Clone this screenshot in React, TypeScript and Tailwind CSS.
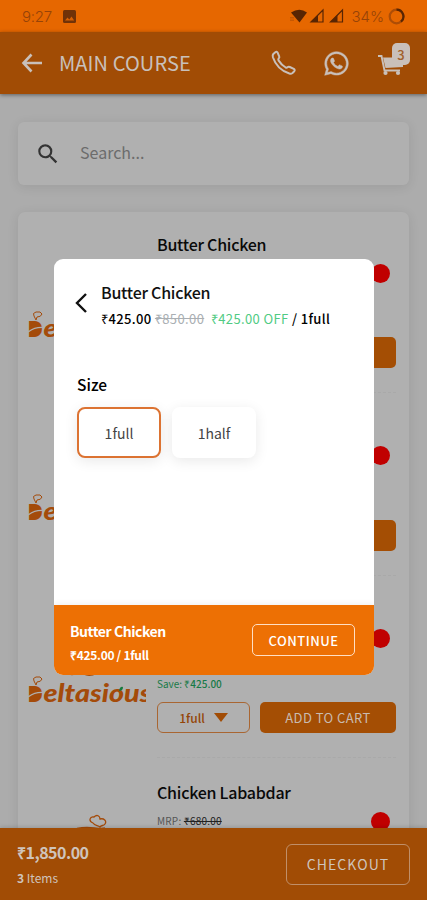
import { MdSearch } from "react-icons/md";
import { FaWhatsapp } from "react-icons/fa";

const dishes = [
  { name: "Butter Chicken", mrp: "₹850.00", save: "₹425.00", size: "1full" },
  { name: "Kadai Chicken", mrp: "₹850.00", save: "₹425.00", size: "1full" },
  { name: "Chicken Masala", mrp: "₹850.00", save: "₹425.00", size: "1full" },
  { name: "Chicken Lababdar", mrp: "₹680.00", save: "₹340.00", size: "1full" },
];

function StatusBar() {
  return (
    <div className="flex h-8 shrink-0 items-center bg-[#e66700] pl-[22px] pr-[22px] text-[#964308]">
      <span className="font-['Inter',sans-serif] text-[15px] font-light leading-none tracking-[-0.2px]">9:27</span>
      <svg className="ml-[11px]" width="13" height="13" viewBox="0 0 13 13">
        <rect width="13" height="13" rx="1.5" fill="#703208" />
        <path d="M2 10.5l2.500-3 1.800 2 2.200-3 2.700 4z" fill="#d66004" />
      </svg>
      <div className="ml-auto flex items-center">
        <svg width="54" height="16" viewBox="0 0 54 16" fill="#582503">
          <path d="M1 4.500Q9.500 -1 17 4.500L9.500 14.500z" />
          <path d="M0 8h3v7H0z" fill="#e66700" />
          <path d="M1 9v5M3 9v5" stroke="#a64a05" strokeWidth="1" strokeDasharray="1.500 1" />
          <path d="M33 2v12H21z" fill="none" stroke="#582503" strokeWidth="1.200" />
          <path d="M28 7v7h-7z" />
          <path d="M52.500 2v12h-12z" fill="none" stroke="#582503" strokeWidth="1.200" />
          <path d="M47.500 7v7h-7z" />
        </svg>
        <span className="ml-[7px] font-['Inter',sans-serif] text-[15px] font-light leading-none">34%</span>
        <svg className="ml-[4px]" width="17" height="17" viewBox="0 0 17 17" fill="none" strokeWidth="2.200">
          <circle cx="8.500" cy="8.500" r="6.800" stroke="#ad4d06" />
          <path d="M8.500 1.700a6.800 6.800 0 0 1 4.500 12" stroke="#582503" />
        </svg>
      </div>
    </div>
  );
}

function Header() {
  return (
    <header className="relative z-10 flex h-[62px] shrink-0 items-center bg-[#a14c05] pl-[21px] text-[#c9c0ba] shadow-[0_1px_4px_rgba(0,0,0,0.45)]">
      <svg width="22" height="20" viewBox="0 0 22 20" fill="none" stroke="currentColor" strokeWidth="2.600">
        <path d="M10.500 1.500L2.500 10l8 8.500M2.500 10H21" />
      </svg>
      <h1 className="ml-[16px] text-[20px] leading-6 tracking-[0.1px]">MAIN COURSE</h1>
      <div className="ml-auto flex items-center">
        <svg width="26" height="26" viewBox="0 0 26 26" fill="none" stroke="currentColor" strokeWidth="2" strokeLinejoin="round">
          <path d="M2.300 4L4.300 2.200Q5.700 1.200 6.600 2.600L8.200 6.300Q8.700 7.600 7.600 8.600Q7 9.400 7.500 10.400Q10.300 14.900 14.700 17.500Q15.700 18 16.500 17.300Q17.500 16.500 18.800 17L22.800 18.900Q24.300 19.900 23.300 21.200L21.500 22.900Q20.200 24 18.400 23.500Q6 19.500 1.900 7.200Q1.300 5.200 2.300 4z" />
        </svg>
        <FaWhatsapp className="ml-[26px] h-[27px] w-[27px] stroke-current" strokeWidth={9} />
        <div className="relative ml-[28px] mr-[15px] h-[32px] w-[34px]">
          <svg className="mt-[7px]" width="26" height="24" viewBox="0 0 26 24" fill="currentColor">
            <path d="M0 2h3.500l3 14.500H22" fill="none" stroke="currentColor" strokeWidth="1.900" />
            <path d="M5 3.500H25v9.500L7.500 14z" />
            <circle cx="7.500" cy="19" r="2.100" />
            <circle cx="20" cy="19" r="2.100" />
          </svg>
          <span className="absolute right-[2px] top-[-4px] flex h-[22px] w-[18px] items-center justify-center rounded-[5px] bg-[#c9c0ba] text-[13px] font-medium leading-none text-[#a1602c]">
            3
          </span>
        </div>
      </div>
    </header>
  );
}

function BrandLogo() {
  return (
    <svg width="118" height="75" viewBox="0 0 118 75" fill="#a44b0a">
      <path d="M65 12c-5-2-3-7 1-6 3-3 6-1 6 2 4-1 7 2 5 5-1 2-4 1-5 3-2-2-5-1-7-4z" fill="none" stroke="#a44b0a" strokeWidth="1.300" />
      <path d="M49 17.500Q57 16 66 17T77 17" fill="none" stroke="#a44b0a" strokeWidth="1.500" />
      <path d="M38 44q6 3 12 0M56 45q6 3 12-1" fill="none" stroke="#a44b0a" strokeWidth="3.500" />
      <path d="M6 53q-2-3 2-4 5-1 6 2-1 3-5 3l-1 3z" fill="none" stroke="#a44b0a" strokeWidth="1" />
      <text x="-0.500" y="74" fontFamily="Open Sans, sans-serif" fontWeight="800" fontSize="23" textLength="15.500" lengthAdjust="spacingAndGlyphs">D</text>
      <ellipse cx="7.500" cy="65.500" rx="5" ry="6.500" />
      <path d="M0 69q7-5 15-4.500" fill="none" stroke="#b0b0b0" strokeWidth="1.300" />
      <text x="15.500" y="73.500" fontFamily="Lato, sans-serif" fontWeight="900" fontStyle="italic" fontSize="24" textLength="108" lengthAdjust="spacingAndGlyphs">eltasious</text>
      <path d="M91 63q1-5 4-4 0 4-4 4z" fill="#177a3d" />
    </svg>
  );
}

function DishRow({ dish }: { dish: (typeof dishes)[number] }) {
  return (
    <article className="flex h-[182.7px] shrink-0 pl-[10px] pr-[14px]">
      <div className="w-[118px] shrink-0 pt-[51px]">
        <BrandLogo />
      </div>
      <div className="ml-[11px] flex flex-1 flex-col">
        <h2 className="mt-[20px] text-[16px] font-medium leading-6 tracking-[-0.25px] text-[#090909]">{dish.name}</h2>
        <div className="mt-[7px] flex h-5 items-center justify-between">
          <span className="text-[10px] leading-4 tracking-[0.2px] text-[#555]">
            MRP: <span className="text-[#222] line-through">{dish.mrp}</span>
          </span>
          <span className="mr-[6px] h-[19px] w-[19px] rounded-full bg-[#c00000]" />
        </div>
        <p className="mt-[28px] text-[10px] leading-4 text-[#187a47]">
          Save: <span className="font-medium">{dish.save}</span>
        </p>
        <div className="mt-[10px] flex gap-[10px]">
          <button className="flex h-[31px] w-[93px] items-center justify-center gap-[9px] rounded-[6px] border border-[#a96632] text-[12px] font-medium leading-none text-[#944507]">
            {dish.size}
            <svg width="14" height="9" viewBox="0 0 14 9">
              <path d="M0 0h14L7 9z" fill="#a14c05" />
            </svg>
          </button>
          <button className="h-[31px] w-[136px] rounded-[5px] bg-[#a44e04] text-[13px] leading-none tracking-[0.45px] text-[#c9bbb0]">
            ADD TO CART
          </button>
        </div>
        <div className="mt-[24px] border-b border-dashed border-[#a9a9a9]" />
      </div>
    </article>
  );
}

function SizeModal() {
  return (
    <div className="absolute left-[54px] top-[259px] z-20 flex h-[416px] w-[320px] flex-col overflow-hidden rounded-[9px] bg-white">
      <div className="flex pl-[20px] pt-[20px]">
        <svg className="mt-[13px] shrink-0" width="14" height="22" viewBox="0 0 14 22" fill="none" stroke="#111" strokeWidth="2.400">
          <path d="M12 2L3 11l9 9" />
        </svg>
        <div className="ml-[13px]">
          <h2 className="text-[16px] font-medium leading-[26px] tracking-[-0.25px] text-[#111]">Butter Chicken</h2>
          <p className="whitespace-pre text-[13px] leading-[27px] tracking-[0.38px] text-black">
            <span className="font-medium">₹425.00</span> <span className="text-[#aaafb3] line-through">₹850.00</span>
            {"  "}
            <span className="text-[#50cb83]">₹425.00 OFF</span> <span className="font-medium">/ 1full</span>
          </p>
        </div>
      </div>
      <div className="flex-1 pl-[23px] pt-[40px]">
        <h3 className="text-[15.5px] font-medium leading-6 text-black">Size</h3>
        <div className="mt-[11px] flex gap-[11px]">
          <button className="h-[51px] w-[84px] rounded-[8px] border-2 border-[#dc7332] bg-white text-[14px] leading-none text-[#444] shadow-[0_3px_14px_rgba(0,0,0,0.09)]">
            1full
          </button>
          <button className="h-[51px] w-[84px] rounded-[8px] bg-white text-[14px] leading-none text-[#444] shadow-[0_3px_14px_rgba(0,0,0,0.09)]">
            1half
          </button>
        </div>
      </div>
      <div className="flex h-[70px] items-center justify-between bg-[#ed7004] pl-[16px] pr-[19px] text-white shadow-[0_-2px_5px_rgba(0,0,0,0.05)]">
        <div className="pt-[5px]">
          <p className="text-[14px] font-bold leading-6 tracking-[-0.45px]">Butter Chicken</p>
          <p className="text-[12px] font-bold leading-6 tracking-[-0.3px]">₹425.00 / 1full</p>
        </div>
        <button className="h-[32px] w-[103px] rounded-[5px] border-[1.5px] border-[#ffdfc4] text-[13px] font-medium leading-none tracking-[0.5px]">
          CONTINUE
        </button>
      </div>
    </div>
  );
}

export default function App() {
  return (
    <div className="relative flex h-[900px] w-[427px] flex-col overflow-hidden bg-[#acacac] font-['Noto_Sans_CJK_SC',sans-serif]">
      <StatusBar />
      <Header />
      <main className="flex min-h-0 flex-1 flex-col overflow-hidden px-[18px] pt-[28px]">
        <div className="flex h-[63px] shrink-0 items-center rounded-[6px] bg-[#b0b0b0] pl-[17px] shadow-[0_2px_12px_rgba(0,0,0,0.09)]">
          <MdSearch className="h-[26px] w-[26px] text-[#333]" />
          <span className="ml-[19px] pb-[3px] text-[16px] leading-6 text-[#6c6c6c]">Search...</span>
        </div>
        <div className="mt-[27px] flex shrink-0 flex-col rounded-[7px] bg-[#b0b0b0] shadow-[0_2px_12px_rgba(0,0,0,0.09)]">
          {dishes.map((dish) => (
            <DishRow key={dish.name} dish={dish} />
          ))}
        </div>
      </main>
      <footer className="z-10 flex h-[72px] shrink-0 items-center justify-between bg-[#a14c05] pl-[17px] pr-[17px] text-[#cfc4bc] shadow-[0_-1px_4px_rgba(0,0,0,0.15)]">
        <div className="pt-[3px]">
          <p className="text-[16px] font-bold leading-6 tracking-[-0.5px]">₹1,850.00</p>
          <p className="text-[12px] leading-[27px]">
            <span className="font-bold">3</span> Items
          </p>
        </div>
        <button className="h-[41px] w-[124px] rounded-[6px] border-[1.5px] border-[#c08f69] text-[14px] leading-none tracking-[1.1px]">
          CHECKOUT
        </button>
      </footer>
      <SizeModal />
    </div>
  );
}
